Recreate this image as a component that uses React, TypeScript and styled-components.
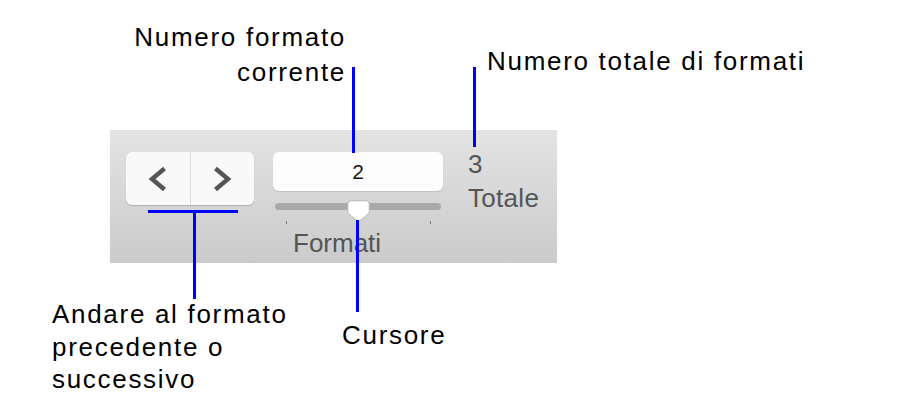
import React from 'react'
import styled, { createGlobalStyle } from 'styled-components'

const GlobalStyle = createGlobalStyle`
  html, body {
    margin: 0;
    padding: 0;
    background: #ffffff;
  }
  * {
    box-sizing: border-box;
  }
`

export default function App() {
  return (
    <>
      <GlobalStyle />
      <Canvas>
        <Panel>
          <NavGroup>
            <NavButton aria-label="Formato precedente">
              <Chevron dir="left" />
            </NavButton>
            <NavButton aria-label="Formato successivo" $divided>
              <Chevron dir="right" />
            </NavButton>
          </NavGroup>

          <FormatColumn>
            <NumberField>2</NumberField>
            <SliderArea>
              <Track />
              <Thumb style={{ left: `${((2 - 1) / (3 - 1)) * 100}%` }}>
                <ThumbShape />
              </Thumb>
            </SliderArea>
            <Ticks>
              <Tick />
              <Tick />
            </Ticks>
            <FieldLabel>Formati</FieldLabel>
          </FormatColumn>

          <TotalColumn>
            <span>3</span>
            <span>Totale</span>
          </TotalColumn>
        </Panel>

        {/* annotazioni */}
        <Callout $right={574} $top={20} $align="right" $lineHeight={35}>
          Numero formato
          <br />
          corrente
        </Callout>
        <Callout $left={487} $top={45}>
          Numero totale di formati
        </Callout>
        <Callout $left={52} $top={298} $lineHeight={32.5}>
          Andare al formato
          <br />
          precedente o
          <br />
          successivo
        </Callout>
        <Callout $left={342} $top={319}>
          Cursore
        </Callout>

        <Leader $x={352} $y={67} $w={3} $h={86} />
        <Leader $x={473} $y={67} $w={3} $h={80} />
        <Leader $x={148} $y={210} $w={90} $h={3} />
        <Leader $x={193} $y={210} $w={3} $h={89} />
        <Leader $x={356} $y={220} $w={3} $h={92} />
      </Canvas>
    </>
  )
}

const Chevron = ({ dir }: { dir: 'left' | 'right' }) => (
  <svg width="22" height="28" viewBox="0 0 22 28">
    <polyline
      points={dir === 'left' ? '17.5,3.5 5,14 17.5,24.5' : '4.5,3.5 17,14 4.5,24.5'}
      fill="none"
      stroke="#555555"
      strokeWidth="4.4"
      strokeLinejoin="miter"
    />
  </svg>
)

const ThumbShape = () => (
  <svg width="23" height="23" viewBox="0 0 23 23">
    <path
      d="M4 0.75 H19 Q22.25 0.75 22.25 4 V13 L11.5 22 L0.75 13 V4 Q0.75 0.75 4 0.75 Z"
      fill="#ffffff"
      stroke="#b4b4b4"
      strokeWidth="1"
    />
  </svg>
)

const Canvas = styled.div`
  position: relative;
  width: 920px;
  height: 415px;
  padding: 130px 0 0 110px;
  overflow: hidden;
  background: #ffffff;
  font-family: 'Liberation Sans', Arial, Helvetica, sans-serif;
`
const Panel = styled.div`
  display: flex;
  align-items: flex-start;
  width: 447px;
  height: 133px;
  padding: 22px 16px 0;
  background: linear-gradient(180deg, #e3e3e3 0%, #d7d7d7 50%, #cbcbcb 100%);
`
const NavGroup = styled.div`
  display: flex;
  width: 128px;
  height: 53px;
  border-radius: 6px;
  background: #f9f9f9;
  box-shadow: 0 1px 1px rgba(0, 0, 0, 0.18);
  overflow: hidden;
`
const NavButton = styled.button<{ $divided?: boolean }>`
  flex: 1;
  display: flex;
  align-items: center;
  justify-content: center;
  padding: 0;
  border: 0;
  border-left: ${({ $divided }) => ($divided ? '1px solid #dedede' : '0')};
  background: transparent;
`
const FormatColumn = styled.div`
  display: flex;
  flex-direction: column;
  width: 170px;
  margin-left: 19px;
`
const NumberField = styled.div`
  height: 39px;
  border-radius: 6px;
  background: #fdfdfd;
  box-shadow: 0 1px 1px rgba(0, 0, 0, 0.12);
  color: #151515;
  font-size: 21px;
  line-height: 39px;
  text-align: center;
`
const SliderArea = styled.div`
  position: relative;
  height: 19px;
  padding: 12px 2px 0;
`
const Track = styled.div`
  height: 7px;
  border-radius: 4px;
  background: #a9a9a9;
`
const Thumb = styled.div`
  position: absolute;
  top: 9px;
  width: 23px;
  height: 23px;
  margin-left: -11.5px;
  line-height: 0;
`
const Ticks = styled.div`
  display: flex;
  justify-content: space-between;
  height: 14px;
  padding: 11px 12px 0 13px;
`
const Tick = styled.span`
  width: 1px;
  height: 3px;
  background: #7a7a7a;
`
const FieldLabel = styled.div`
  padding-left: 20px;
  margin-top: 4px;
  color: #555555;
  font-size: 26px;
  line-height: 30px;
`
const TotalColumn = styled.div`
  display: flex;
  flex-direction: column;
  margin: -5px 0 0 25px;
  color: #555555;
  font-size: 26px;
  line-height: 34px;
  letter-spacing: 0.3px;
`
const Callout = styled.div<{
  $left?: number
  $right?: number
  $top: number
  $align?: 'left' | 'right'
  $lineHeight?: number
}>`
  position: absolute;
  top: ${({ $top }) => $top}px;
  ${({ $left }) => ($left !== undefined ? `left: ${$left}px;` : '')}
  ${({ $right }) => ($right !== undefined ? `right: ${$right}px;` : '')}
  text-align: ${({ $align }) => $align ?? 'left'};
  white-space: nowrap;
  color: #000000;
  font-size: 26px;
  line-height: ${({ $lineHeight }) => $lineHeight ?? 33}px;
  letter-spacing: 1.7px;
`
const Leader = styled.div<{ $x: number; $y: number; $w: number; $h: number }>`
  position: absolute;
  left: ${({ $x }) => $x}px;
  top: ${({ $y }) => $y}px;
  width: ${({ $w }) => $w}px;
  height: ${({ $h }) => $h}px;
  background: #0000ff;
`
